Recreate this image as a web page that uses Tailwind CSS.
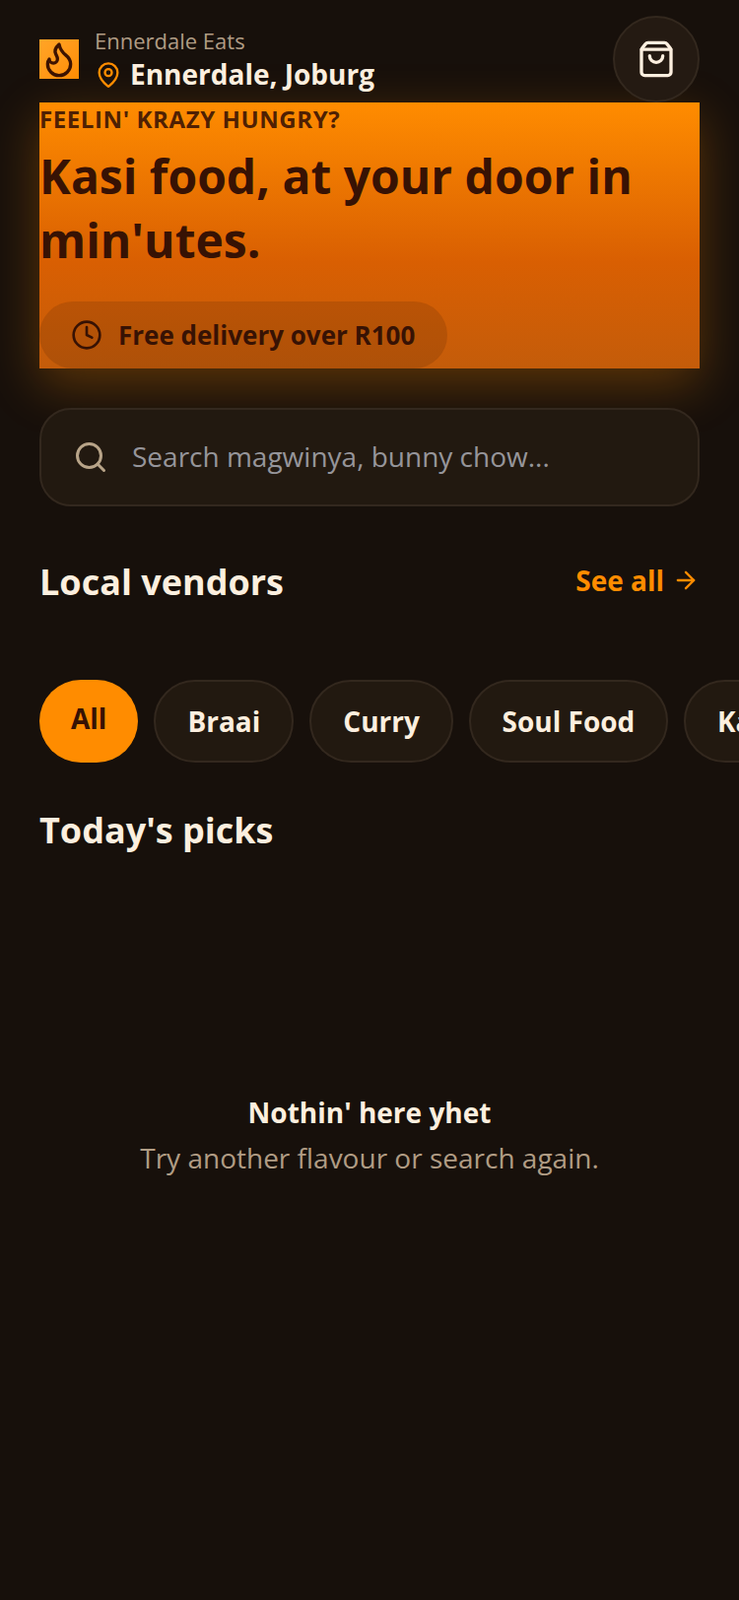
<!DOCTYPE html>
<html lang="en">
  <head>
    <meta charset="UTF-8" />
    <meta name="viewport" content="width=device-width, initial-scale=1.0" />
    <script src="https://cdn.jsdelivr.net/npm/@tailwindcss/browser@4"></script>
    <title>Ennerdale Eats</title>
  </head>
  <body class="bg-[#17100b] min-h-screen font-['Open_Sans',sans-serif] text-[#fcefdf]">
    <div class="w-[750px] h-[1624px] overflow-hidden px-10 pt-4">
      <!-- Header -->
      <header class="flex items-center justify-between h-[88px]">
        <div class="flex items-center gap-4">
          <div class="w-10 h-10 bg-linear-to-br from-[#ffa526] to-[#ff8c00] flex items-center justify-center">
            <svg class="w-10 h-10" viewBox="0 0 24 24" fill="none" stroke="#3d1300" stroke-width="2" stroke-linecap="round" stroke-linejoin="round">
              <path d="M8.5 14.5A2.5 2.5 0 0 0 11 12c0-1.38-.5-2-1-3-1.072-2.143-.224-4.054 2-6 .5 2.5 2 4.9 4 6.5 2 1.6 3 3.5 3 5.5a7 7 0 1 1-14 0c0-1.153.433-2.294 1-3a2.5 2.5 0 0 0 2.5 2.5z" />
            </svg>
          </div>
          <div>
            <p class="text-[22px] leading-[30px] text-[#b09c84] -mt-0.5">Ennerdale Eats</p>
            <div class="flex items-center gap-2 mt-px">
              <svg class="w-7 h-7 mt-0.5" viewBox="0 0 24 24" fill="none" stroke="#ff8c00" stroke-width="2" stroke-linecap="round" stroke-linejoin="round">
                <path d="M20 10c0 4.993-5.539 10.193-7.399 11.799a1 1 0 0 1-1.202 0C9.539 20.193 4 14.993 4 10a8 8 0 0 1 16 0" />
                <circle cx="12" cy="10" r="3" />
              </svg>
              <p class="text-[28px] leading-[36px] font-bold">Ennerdale, Joburg</p>
            </div>
          </div>
        </div>
        <button class="w-[88px] h-[88px] rounded-full bg-[#241a12] border-2 border-[#33281e] flex items-center justify-center">
          <svg class="w-10 h-10" viewBox="0 0 24 24" fill="none" stroke="#fcefdf" stroke-width="2" stroke-linecap="round" stroke-linejoin="round">
            <path d="M16 10a4 4 0 0 1-8 0" />
            <path d="M3.103 6.034h17.794" />
            <path d="M3.4 5.467a2 2 0 0 0-.4 1.2V20a2 2 0 0 0 2 2h14a2 2 0 0 0 2-2V6.667a2 2 0 0 0-.4-1.2l-2-2.667A2 2 0 0 0 17 2H7a2 2 0 0 0-1.6.8z" />
          </svg>
        </button>
      </header>

      <!-- Hero -->
      <section class="h-[270px] bg-linear-to-b from-[#ff8c00] via-[#d95f02] via-60% to-[#c45c0a] shadow-[0_16px_48px_rgba(255,140,0,0.3)] text-[#371204]">
        <p class="text-2xl leading-[34px] font-bold tracking-[0.6px] text-[#371204]/90">FEELIN' KRAZY HUNGRY?</p>
        <h1 class="text-5xl leading-[65px] font-bold mt-2">Kasi food, at your door in min'utes.</h1>
        <div class="inline-flex items-center gap-4 h-[68px] pl-8 pr-[33px] rounded-full bg-[#371204]/15 mt-[30px]">
          <svg class="w-8 h-8" viewBox="0 0 24 24" fill="none" stroke="#371204" stroke-width="2" stroke-linecap="round" stroke-linejoin="round">
            <circle cx="12" cy="12" r="10" />
            <path d="M12 6v6l4 2" />
          </svg>
          <span class="text-[26px] font-bold">Free delivery over R100</span>
        </div>
      </section>

      <!-- Search -->
      <div class="mt-10 h-[100px] flex items-center gap-6 px-[32px] bg-[#221910] border-2 border-[#33281e] rounded-[32px]">
        <svg class="w-9 h-9" viewBox="0 0 24 24" fill="none" stroke="#b8a488" stroke-width="2" stroke-linecap="round" stroke-linejoin="round">
          <circle cx="11" cy="11" r="8" />
          <path d="m21 21-4.3-4.3" />
        </svg>
        <span class="text-[28px] text-[#96959a] pb-0.5">Search magwinya, bunny chow...</span>
      </div>

      <!-- Vendors -->
      <div class="flex items-center justify-between mt-12">
        <h2 class="text-4xl leading-[50px] font-bold pt-1">Local vendors</h2>
        <a class="flex items-center gap-2 text-[#ff8c00] text-[28px] font-bold">
          See all
          <svg class="w-7 h-7" viewBox="0 0 24 24" fill="none" stroke="#ff8c00" stroke-width="2" stroke-linecap="round" stroke-linejoin="round">
            <path d="M5 12h14" />
            <path d="m12 5 7 7-7 7" />
          </svg>
        </a>
      </div>

      <!-- Chips -->
      <div class="flex gap-4 mt-[74px] mr-[-40px] h-[84px] text-[28px] font-bold">
        <span class="shrink-0 px-8 py-[19px] leading-10 rounded-full bg-[#ff8c00] text-[#371204]">All</span>
        <span class="shrink-0 px-8 py-5 leading-10 rounded-full bg-[#221910] border-2 border-[#33281e]">Braai</span>
        <span class="shrink-0 px-8 py-5 leading-10 rounded-full bg-[#221910] border-2 border-[#33281e]">Curry</span>
        <span class="shrink-0 w-[202px] text-center py-5 leading-10 rounded-full bg-[#221910] border-2 border-[#33281e]">Soul Food</span>
        <span class="shrink-0 px-8 py-5 leading-10 rounded-full bg-[#221910] border-2 border-[#33281e]">Kasi</span>
      </div>

      <h2 class="text-4xl leading-[50px] font-bold mt-[44px]">Today's picks</h2>

      <!-- Empty state -->
      <div class="text-center text-[28px] mt-[239px]">
        <p class="font-bold leading-[44px]">Nothin' here yhet</p>
        <p class="text-[#b09c84] leading-[48px]">Try another flavour or search again.</p>
      </div>
    </div>
  </body>
</html>
